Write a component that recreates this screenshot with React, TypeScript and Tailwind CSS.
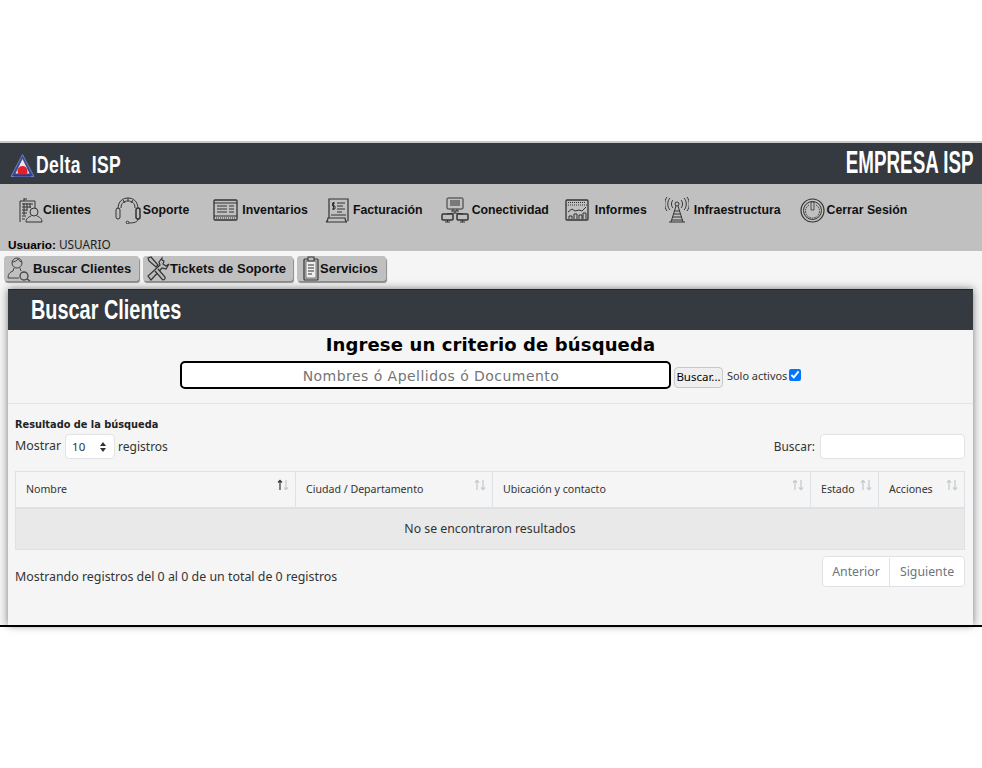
import { ReactNode } from 'react';

const stroke = { fill: 'none', stroke: '#333', strokeWidth: 1 };

const IconClientes = () => (
  <svg width="24" height="26" viewBox="0 0 24 26" {...stroke}>
    <path d="M1 25V4h15v7M5 4V1M5 2h3M3 7h11M3 10h9M3 13h5M3 16h5M3 19h4M3 22h3M5 6v12M8 6v8M11 6v5" />
    <circle cx="15" cy="15" r="4" />
    <path d="M7 25c0-4 3-5 5-6M23 25c0-4-3-5-5-6M7 25h16" />
  </svg>
);
const IconSoporte = () => (
  <svg width="28" height="28" viewBox="0 0 28 28" {...stroke}>
    <path d="M4 13C4 5 9 2 14 2s10 3 10 11M7 12C7 7 10 5 14 5s7 2 7 7M9 4l2 3M14 2v3M19 4l-2 3" />
    <rect x="2" y="12" width="4" height="11" rx="2" />
    <rect x="22" y="12" width="4" height="11" rx="2" strokeWidth="1.5" />
    <path d="M24 23c0 3-4 4-9 4" />
    <circle cx="13.500" cy="26.500" r="1.300" />
  </svg>
);
const IconInventarios = () => (
  <svg width="25" height="22" viewBox="0 0 25 22" {...stroke}>
    <rect x="1" y="1" width="23" height="20" rx="1" strokeWidth="1.300" />
    <path d="M1 4h23M1 17h23M4 7h10M4 10h10M4 13h10M16 7h5M16 10h5M16 13h5" />
    <path d="M3 19h19" strokeDasharray="1 1" />
  </svg>
);
const IconFacturacion = () => (
  <svg width="25" height="25" viewBox="0 0 25 25" {...stroke}>
    <path d="M4 20V1h19v22M1 24h21c-2-1-2-3-2-4H3c0 1 0 3-2 4z" strokeWidth="1.200" />
    <path d="M12 5h8M12 8h6M12 11h8M12 14h5M6 17h15" />
    <path d="M10 5H7.500v3H10v3H7" />
    <path d="M8.500 4v8" />
  </svg>
);
const IconConectividad = () => (
  <svg width="28" height="26" viewBox="0 0 28 26" {...stroke}>
    <rect x="6" y="1" width="16" height="11" rx="1" />
    <path d="M9 4h10M9 6h10M9 8h10M12 12v2M16 12v2M10 14h8M14 14v2M14 16L6 17M14 16l8 1" />
    <rect x="1" y="17" width="11" height="6" rx="1" strokeWidth="1.500" />
    <rect x="16" y="17" width="11" height="6" rx="1" strokeWidth="1.500" />
    <path d="M4 25h5M6.500 23v2M19 25h5M21.500 23v2" />
  </svg>
);
const IconInformes = () => (
  <svg width="24" height="22" viewBox="0 0 24 22" {...stroke}>
    <rect x="1" y="1" width="22" height="20" rx="1" strokeWidth="1.300" />
    <path d="M1 6h22M3 3.500h18" strokeDasharray="1 1" />
    <path d="M3 13l4-3 3 2 4-1 3 1 4-4" />
    <path d="M4 20v-3h3v3M9 20v-5h3v5M14 20v-4h3v4M18 20v-6h3v6" />
  </svg>
);
const IconInfra = () => (
  <svg width="24" height="26" viewBox="0 0 24 26" {...stroke}>
    <circle cx="12" cy="7" r="2" />
    <path d="M8 3c-2 2-2 6 0 8M16 3c2 2 2 6 0 8M5 1C2 4 2 10 5 13M19 1c3 3 3 9 0 12M2 0C-1 4-1 10 2 14M22 0c3 4 3 10 0 14" />
    <path d="M11 9L6 25M13 9l5 16M4 25h16M9.500 14h5M8.500 17h7M7.500 20h9M7 23h10" />
  </svg>
);
const IconCerrar = () => (
  <svg width="25" height="25" viewBox="0 0 25 25" {...stroke}>
    <circle cx="12.500" cy="12.500" r="11.500" strokeWidth="1.200" />
    <circle cx="12.500" cy="12.500" r="9" />
    <path d="M9 7a7 7 0 1 0 7 0" strokeDasharray="1.500 1" />
    <path d="M11 4h3v8h-3z" strokeWidth="0.800" />
  </svg>
);
const IconBuscarCliente = () => (
  <svg width="24" height="26" viewBox="0 0 24 26" {...stroke} stroke="#444">
    <circle cx="10" cy="7" r="5" />
    <path d="M5 6c2 0 5-1 6-3 1 2 3 3 4 3M7 12l-1 3c-3 1-5 3-5 7h11M13 12l1 3" />
    <circle cx="17" cy="20" r="4" strokeWidth="1.300" />
    <path d="M20 23l3 2" strokeWidth="1.500" />
  </svg>
);
const IconTickets = () => (
  <svg width="24" height="25" viewBox="0 0 24 25" {...stroke} stroke="#333">
    <path d="M16 2l-3 4 1 3L2 20l3 4 11-12 4 1 3-5-3 2-3-2 1-3-2-1z" fill="#bbb" strokeWidth="1.200" />
    <path d="M2 2l3-1 7 8-2 2-7-6zM12 13l7 8c1 2-2 4-3 2l-7-8" fill="#bbb" strokeWidth="1.200" />
  </svg>
);
const IconServicios = () => (
  <svg width="16" height="25" viewBox="0 0 16 25" {...stroke} stroke="#333">
    <rect x="1" y="3" width="14" height="21" rx="1" strokeWidth="1.200" />
    <rect x="3" y="5" width="10" height="17" fill="#eee" strokeWidth="0.600" />
    <rect x="5" y="1" width="6" height="4" fill="#bbb" />
    <path d="M5 9h6M5 12h6M5 15h6M5 18h4" />
  </svg>
);
const Logo = () => (
  <svg width="25" height="25" viewBox="0 0 25 25">
    <path d="M12.500 1.500L24 23.500H1z" fill="#3a4a8c" stroke="#6f7fb8" strokeWidth="1" />
    <path d="M12.500 6L19.500 20.500H5.500z" fill="#e8e8ee" />
    <circle cx="12.500" cy="18" r="5" fill="#e0202a" />
    <path d="M4 22.500h17" stroke="#2c3a80" strokeWidth="2" />
  </svg>
);

const SortIcon = ({ up = '#c4c9cc', down = '#c4c9cc' }: { up?: string; down?: string }) => (
  <svg width="12" height="12" viewBox="0 0 12 12" fill="none" strokeWidth="1.200">
    <path d="M3 11V1.500M1 3.500l2-2.200 2 2.200" stroke={up} />
    <path d="M9 1v9.500M7 8.500l2 2.200 2-2.200" stroke={down} />
  </svg>
);

const menu: { label: string; icon: ReactNode; cls: string }[] = [
  { label: 'Clientes', icon: <IconClientes />, cls: 'ml-[19px]' },
  { label: 'Soporte', icon: <IconSoporte />, cls: 'ml-[23px] gap-px' },
  { label: 'Inventarios', icon: <IconInventarios />, cls: 'ml-[24px] gap-[4px]' },
  { label: 'Facturación', icon: <IconFacturacion />, cls: 'ml-[17px] gap-[3px]' },
  { label: 'Conectividad', icon: <IconConectividad />, cls: 'ml-[18px] gap-[3px]' },
  { label: 'Informes', icon: <IconInformes />, cls: 'ml-[16px] gap-[6px]' },
  { label: 'Infraestructura', icon: <IconInfra />, cls: 'ml-[18px] gap-[5px]' },
  { label: 'Cerrar Sesión', icon: <IconCerrar />, cls: 'ml-[19px] gap-[2px]' },
];

const tabs: { label: string; icon: ReactNode; cls: string }[] = [
  { label: 'Buscar Clientes', icon: <IconBuscarCliente />, cls: 'w-[135px] pl-[3px] gap-[2px]' },
  { label: 'Tickets de Soporte', icon: <IconTickets />, cls: 'w-[150px] pl-[3px]' },
  { label: 'Servicios', icon: <IconServicios />, cls: 'w-[89px] pl-[6px] gap-px' },
];

const columns = [
  { label: 'Nombre', cls: 'w-[280px]', up: '#333' },
  { label: 'Ciudad / Departamento', cls: 'w-[197px]' },
  { label: 'Ubicación y contacto', cls: 'w-[318px]' },
  { label: 'Estado', cls: 'w-[68px]' },
  { label: 'Acciones', cls: 'flex-1' },
];

export default function App() {
  return (
    <div className="min-h-[768px] bg-white pt-[141px] font-['Noto_Sans',sans-serif] text-[#212529]">
      <div className="border-t-2 border-[#c9c9c9]">
        {/* Top bar */}
        <header className="flex h-[41px] items-center justify-between bg-[#343a40] pl-[10px] pr-[8px]">
          <div className="flex items-center gap-px pt-[3px]">
            <Logo />
            <span className="origin-left scale-x-[0.73] whitespace-pre font-['Liberation_Sans',sans-serif] text-[24px] font-bold tracking-[0.6px] text-white">
              Delta  ISP
            </span>
          </div>
          <span className="mb-[3px] origin-right scale-x-[0.587] whitespace-nowrap font-['Liberation_Sans',sans-serif] text-[32px] font-bold text-white">
            EMPRESA ISP
          </span>
        </header>

        {/* Main menu */}
        <nav className="flex h-[67px] flex-col bg-[#c0c0c0]">
          <div className="flex h-[52px] shrink-0 items-center">
            {menu.map((m) => (
              <div key={m.label} className={`flex items-center ${m.cls}`}>
                {m.icon}
                <span className="font-['Liberation_Sans',sans-serif] text-[12.300px] font-bold text-[#111]">
                  {m.label}
                </span>
              </div>
            ))}
          </div>
          <div className="ml-[8px] mt-px shrink-0 text-[11.800px] leading-[14px] text-[#222]">
            <b className="font-['Liberation_Sans',sans-serif] font-bold text-black">Usuario:</b> USUARIO
          </div>
        </nav>

        {/* Tabs + panel */}
        <div className="h-[374px] bg-[#f5f5f5]">
          <div className="flex h-[38px] gap-1 pl-1 pt-[5px]">
            {tabs.map((t) => (
              <div
                key={t.label}
                className={`flex h-[25px] items-center rounded-[3px] bg-[#c0c0c0] shadow-[1px_2px_1px_#8a8a8a] ${t.cls}`}
              >
                {t.icon}
                <span className="whitespace-nowrap font-['Liberation_Sans',sans-serif] text-[13px] font-bold text-[#111]">
                  {t.label}
                </span>
              </div>
            ))}
          </div>

          <section className="ml-[8px] mr-[9px] h-[336px] bg-[#f5f5f5] shadow-[0_0_8px_#777]">
            <div className="flex h-[41px] items-center border-t border-[#23272b] bg-[#343a40] pl-[23px]">
              <h1 className="mb-px origin-left scale-x-[0.71] whitespace-nowrap font-['Liberation_Sans',sans-serif] text-[28px] font-bold text-white">
                Buscar Clientes
              </h1>
            </div>

            <div className="flex h-[74px] flex-col items-center border-b border-[#e4e4e4]">
              <h2 className="mt-[1px] h-[30px] font-['DejaVu_Sans',sans-serif] text-[18px] font-bold tracking-[0.13px] text-black">
                Ingrese un criterio de búsqueda
              </h2>
              <div className="flex w-full items-center pl-[172px]">
                <input
                  readOnly
                  placeholder="Nombres ó Apellidos ó Documento"
                  className="h-[28px] w-[491px] rounded-[5px] border-2 border-black bg-white pl-[11px] pt-[2px] text-center font-['DejaVu_Sans',sans-serif] text-[14px] tracking-[0.46px] placeholder:text-[#757575]"
                />
                <button className="ml-[3px] mt-[4px] h-[21px] w-[49px] rounded-[4px] border border-[#c8c8c8] bg-[#efefef] text-[11.500px] text-black">
                  Buscar...
                </button>
                <span className="ml-[4px] mt-[3px] font-['Noto_Sans',sans-serif] text-[10.900px] text-[#333]">Solo activos</span>
                <input type="checkbox" defaultChecked className="ml-[2px] size-[12px] accent-[#0075ff]" />
              </div>
            </div>

            <div className="pl-[7px] pr-[8px]">
              <div className="mt-[13px] font-['DejaVu_Sans',sans-serif] text-[9.800px] font-bold leading-[16px] text-[#222]">
                Resultado de la búsqueda
              </div>
              <div className="mt-[1px] flex h-[25px] items-center justify-between text-[12.400px] text-[#333]">
                <div className="flex items-center">
                  Mostrar
                  <div className="relative ml-[4px] mr-[3px]">
                    <select className="h-[25px] w-[50px] appearance-none rounded-[4px] border border-[#e3e3e3] bg-white pl-[6px] text-[11.500px]">
                      <option>10</option>
                    </select>
                    <svg className="absolute right-[8px] top-[8px]" width="8" height="10" viewBox="0 0 8 10" fill="#333">
                      <path d="M4 0l3 4H1zM4 10L1 6h6z" />
                    </svg>
                  </div>
                  <span className="text-[12px]">registros</span>
                </div>
                <div className="flex items-center gap-[5px] text-[11.900px]">
                  Buscar:
                  <input readOnly className="h-[25px] w-[145px] rounded-[4px] border border-[#e3e3e3] bg-white" />
                </div>
              </div>

              {/* Table */}
              <div className="mt-[12px] border border-[#dee2e6]">
                <div className="flex h-[37px] border-b-2 border-[#dee2e6]">
                  {columns.map((c) => (
                    <div
                      key={c.label}
                      className={`relative flex items-center border-r border-[#dee2e6] pl-[10px] text-[10.600px] text-[#333] last:border-r-0 ${c.cls}`}
                    >
                      {c.label}
                      <span className="absolute right-[6px] top-[7px] flex">
                        <SortIcon up={c.up} />
                      </span>
                    </div>
                  ))}
                </div>
                <div className="flex h-[40px] items-center justify-center bg-[#e9e9e9] pt-px text-[12.300px] text-[#333]">
                  No se encontraron resultados
                </div>
              </div>

              {/* Footer */}
              <div className="mt-[6px] flex items-start justify-between">
                <div className="mt-[12px] text-[12.400px] text-[#333]">Mostrando registros del 0 al 0 de un total de 0 registros</div>
                <div className="flex h-[31px] items-center rounded-[4px] border border-[#dee2e6] bg-white pt-px text-[12.300px] text-[#6c757d]">
                  <span className="flex h-full w-[67px] items-center justify-center border-r border-[#dee2e6]">Anterior</span>
                  <span className="flex h-full w-[74px] items-center justify-center">Siguiente</span>
                </div>
              </div>
            </div>
          </section>
        </div>
        <div className="h-[2px] bg-black" />
      </div>
    </div>
  );
}
